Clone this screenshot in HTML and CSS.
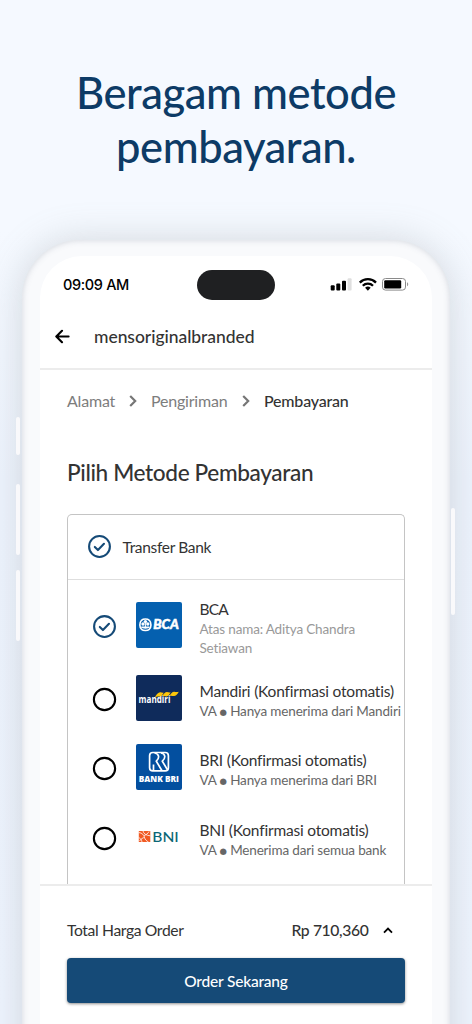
FILE: index.html
```html
<!DOCTYPE html>
<html lang="id">
<head>
<meta charset="utf-8">
<title>Beragam metode pembayaran</title>
<link rel="stylesheet" href="styles.css">
</head>
<body>
<main class="promo">
  <h1 class="headline">Beragam metode<br>pembayaran.</h1>
  <div class="phone">
    <i class="key key-mute"></i><i class="key key-up"></i><i class="key key-down"></i><i class="key key-power"></i>
    <div class="screen">
      <div class="status">
        <span class="clock">09:09 AM</span>
        <span class="island"></span>
        <svg class="indicators" width="80" height="16" viewBox="0 0 80 16">
          <rect x="0.7" y="9.2" width="4" height="5.4" rx="1"/>
          <rect x="6.3" y="7.4" width="4" height="7.2" rx="1"/>
          <rect x="12" y="4.8" width="4" height="9.8" rx="1"/>
          <rect x="17.6" y="2.2" width="4" height="12.4" rx="1" fill="#dfdfdf"/>
          <g fill="none" stroke="#000" stroke-width="2.3">
            <path d="M29.8 6.6a11.4 11.4 0 0 1 16.2 0"/>
            <path d="M32.8 9.7a7.2 7.2 0 0 1 10.2 0"/>
          </g>
          <path d="M35.1 11.8a4 4 0 0 1 5.6 0l-2.8 2.9z"/>
          <rect x="52.5" y="2.5" width="23" height="11.6" rx="3" fill="none" stroke="#8a8a8a"/>
          <rect x="54.2" y="4.2" width="17" height="8.2" rx="1.2"/>
          <path d="M77 6.2c1.7.6 1.7 3.4 0 4z" fill="#999"/>
        </svg>
      </div>
      <header class="appbar">
        <svg width="16" height="16" viewBox="0 0 16 16" fill="none" stroke="#000" stroke-width="2.1" stroke-linecap="round" stroke-linejoin="round"><path d="M13.600 8.500H1.500M7 2.800 1.300 8.500 7 14.200"/></svg>
        <span class="store">mensoriginalbranded</span>
      </header>
      <nav class="steps">
        <span class="step-1">Alamat</span>
        <svg class="sep" width="8" height="12" viewBox="0 0 8 12"><path d="M1.2 1 6.2 6l-5 5"/></svg>
        <span class="step-2">Pengiriman</span>
        <svg class="sep" width="8" height="12" viewBox="0 0 8 12"><path d="M1.2 1 6.2 6l-5 5"/></svg>
        <span class="step-3">Pembayaran</span>
      </nav>
      <h2 class="title">Pilih Metode Pembayaran</h2>
      <section class="methods">
        <div class="group">
          <svg class="radio" viewBox="0 0 24 24"><circle class="on" cx="12" cy="12" r="10"/><path class="on" d="m7.500 12.400 3 3 5.800-6"/></svg>
          <span class="group-name">Transfer Bank</span>
        </div>
        <div class="list">
          <div class="bank bank-bca">
            <svg class="radio" viewBox="0 0 24 24"><circle class="on" cx="12" cy="12" r="10"/><path class="on" d="m7.500 12.400 3 3 5.800-6"/></svg>
            <svg class="logo" viewBox="0 0 46 46">
              <rect width="46" height="46" rx="2" fill="#0560af"/>
              <path d="M5.500 18.300c1.800-1.700 6-1.700 7.800 0 2.200 2.500 2.200 6.800 0 9-1.800 1.500-6 1.500-7.800 0-2.200-2.200-2.200-6.500 0-9z" fill="none" stroke="#fff" stroke-width="1.600"/>
              <g fill="#fff"><circle cx="9.400" cy="19.600" r="1.700"/><circle cx="7" cy="22" r="1.700"/><circle cx="11.800" cy="22" r="1.700"/><path d="M8.900 21h1v3.500h3.600v1.500l-4.100.7-4.100-.7v-1.500h3.600z"/></g>
              <text class="mark-bca" x="17.300" y="27.300" textLength="25.500" lengthAdjust="spacingAndGlyphs">BCA</text>
            </svg>
            <div class="info"><div class="name name-bca">BCA</div><div class="note muted">Atas nama: Aditya Chandra<br>Setiawan</div></div>
          </div>
          <div class="bank">
            <svg class="radio" viewBox="0 0 24 24"><circle class="off" cx="12" cy="12" r="10.200"/></svg>
            <svg class="logo" viewBox="0 0 46 46">
              <rect width="46" height="46" rx="2" fill="#0f2b5b"/>
              <text class="mark-mandiri" x="2.600" y="28.200" textLength="31.800" lengthAdjust="spacingAndGlyphs">mandiri</text>
              <g fill="#fdc60a">
                <path d="M19 22.300c1.300-3 3.500-5.200 5.300-5 1.300.1 2 .8 3.400.4-1.300 2.300-2.500 3.900-3.900 3.900-1.500 0-3-.4-4.800.7z"/>
                <path d="M26.300 21.300c1.300-2.300 3-4.300 4.700-4.200 1.300.1 2 .8 3.600.4-1.300 2.300-2.500 3.900-3.900 3.900-1.400 0-2.800-.6-4.400-.1z"/>
                <path d="M33.500 20.900c1.300-2.300 3-4.200 4.700-4.100 1.500.1 2.500.6 4.600-.1-1.800 3-3.200 4.500-4.800 4.400-1.400-.1-2.800-.7-4.500-.2z"/>
              </g>
            </svg>
            <div class="info"><div class="name">Mandiri (Konfirmasi otomatis)</div><div class="note">VA <b>●</b> Hanya menerima dari Mandiri</div></div>
          </div>
          <div class="bank">
            <svg class="radio" viewBox="0 0 24 24"><circle class="off" cx="12" cy="12" r="10.200"/></svg>
            <svg class="logo" viewBox="0 0 46 46">
              <rect width="46" height="46" rx="2" fill="#034f9f"/>
              <g fill="none" stroke="#fff" stroke-width="1.700" stroke-linejoin="round">
                <rect x="13.600" y="8.500" width="18.800" height="18.400" rx="3.200"/>
                <path d="M18.500 9c4.500.5 5.500 4.800 1.800 8.200l5.700 9.500M25 9c4.500.8 5 5 1.300 8.200l5 8.300M17.500 20.500v6"/>
              </g>
              <text class="mark-bri" x="2.800" y="37.900" textLength="40.200" lengthAdjust="spacingAndGlyphs">BANK BRI</text>
            </svg>
            <div class="info"><div class="name">BRI (Konfirmasi otomatis)</div><div class="note">VA <b>●</b> Hanya menerima dari BRI</div></div>
          </div>
          <div class="bank">
            <svg class="radio" viewBox="0 0 24 24"><circle class="off" cx="12" cy="12" r="10.200"/></svg>
            <svg class="logo" viewBox="0 0 46 46">
              <path d="M2.800 17h11.500v11H2.800z" fill="#f15a23"/>
              <path d="M2.800 18.500c3.500.5 5.200 2.500 5.700 5 .4 2 2 3.500 4 4.500M7 17c.5 2.500 3 4.500 7.300 4.800M2.800 23.700c1.500.5 2.700 1.800 3.200 4.300M8.500 23.500c-1.500 0-3.500 1.500-5 3.500M8 21.500c2-.5 4-2 5-4" fill="none" stroke="#fff" stroke-width=".8"/>
              <text class="mark-bni" x="16.300" y="27.800" textLength="26.500" lengthAdjust="spacingAndGlyphs">BNI</text>
            </svg>
            <div class="info"><div class="name">BNI (Konfirmasi otomatis)</div><div class="note">VA <b>●</b> Menerima dari semua bank</div></div>
          </div>
        </div>
      </section>
      <footer class="checkout">
        <div class="total">
          <span class="total-label">Total Harga Order</span>
          <span class="amount">Rp 710,360</span>
          <svg class="caret" width="10" height="7" viewBox="0 0 10 7"><path d="m1 5.600 4-4 4 4"/></svg>
        </div>
        <button class="order">Order Sekarang</button>
      </footer>
    </div>
  </div>
</main>
</body>
</html>
```
FILE: styles.css
```css
* { box-sizing: border-box; }
body {
  margin: 0;
  font-family: Lato, "Open Sans", sans-serif;
  font-variant-ligatures: none;
  color: #333;
  background: #f5f9ff;
}
.promo {
  height: 1024px;
  overflow: hidden;
  background: linear-gradient(#f5f9ff 0, #f5f9ff 230px, #edf3fd 480px, #eef4fe 1024px);
}
.headline {
  height: 240px;
  margin: 0;
  padding-top: 65px;
  text-align: center;
  font-weight: 500;
  font-size: 43.500px;
  line-height: 54px;
  letter-spacing: -.45px;
  color: #0d3b66;
}
.phone {
  position: relative;
  width: 428px;
  height: 900px;
  margin-left: 22px;
  padding: 16px 18px;
  border-radius: 58px;
  background: #f9fafc;
  box-shadow: 0 0 36px rgba(135, 145, 145, .3), inset 0 0 6px rgba(120, 130, 150, .3);
}
.key {
  position: absolute;
  left: -6px;
  width: 4px;
  border-radius: 2px;
  background: #f9f9fb;
}
.key-mute { top: 177px; height: 38px; }
.key-up { top: 244px; height: 71px; }
.key-down { top: 330px; height: 71px; }
.key-power { left: auto; right: -5px; top: 268px; height: 107px; }
.screen {
  display: flex;
  flex-direction: column;
  height: 768px;
  border-radius: 42px 42px 0 0;
  background: #fff;
  overflow: hidden;
}
.status {
  flex: none;
  display: grid;
  grid-template-columns: 157px 78px 1fr;
  align-items: center;
  height: 57px;
}
.clock {
  padding-left: 23px;
  font: 500 14.500px/20px Inter, sans-serif;
  letter-spacing: -.35px;
  color: #000;
}
.island { height: 30px; border-radius: 15px; background: #1f2022; }
.indicators { margin: -1px 0 0 55px; }
.appbar {
  flex: none;
  display: flex;
  align-items: center;
  gap: 23px;
  height: 57px;
  padding: 0 0 9px 15px;
  border-bottom: 2px solid #ececec;
}
.store { font-size: 17.500px; font-weight: 500; letter-spacing: -.05px; }
.steps {
  flex: none;
  display: flex;
  align-items: center;
  height: 62px;
  padding: 0 0 2px 27px;
  font-size: 16px;
  letter-spacing: -.2px;
  color: #7d7d7d;
}
.sep { margin: 2px 14px 0; }
.sep path { fill: none; stroke: #777; stroke-width: 2.200; }
.step-1 { width: 48px; }
.step-2 { width: 77px; }
.step-3 { color: #333; font-weight: 500; }
.title {
  flex: none;
  height: 82px;
  margin: 0;
  padding-left: 27px;
  font-size: 22.600px;
  line-height: 82px;
  font-weight: 500;
  letter-spacing: -.36px;
  white-space: nowrap;
}
.methods {
  flex: 1;
  min-height: 0;
  margin: 0 27px;
  border: 1px solid #c4c4c4;
  border-bottom: 0;
  border-radius: 5px 5px 0 0;
  overflow: hidden;
}
.group {
  display: flex;
  align-items: center;
  gap: 10.500px;
  height: 65px;
  padding: 0 0 1px 19px;
  border-bottom: 1px solid #dedede;
  font-size: 15.500px;
  letter-spacing: -.32px;
}
.radio { flex: none; width: 25px; height: 25px; fill: none; stroke-width: 2; }
.on { stroke: #154a77; stroke-linecap: round; stroke-linejoin: round; }
.off { stroke: #000; }
.list { padding: 21.500px 0 0 24px; }
.bank { display: flex; height: 69.500px; }
.bank-bca { height: 73px; }
.bank .radio { margin-top: 12px; }
.logo { flex: none; width: 46px; height: 46px; margin: 0 17.500px 0 19px; }
.info { padding-top: 5px; white-space: nowrap; }
.bank-bca .info { padding-top: 0; margin-top: -3.500px; }
.name { font-size: 15.500px; line-height: 22px; letter-spacing: -.2px; }
.name-bca { letter-spacing: -.8px; }
.note { font-size: 13.500px; line-height: 18.500px; letter-spacing: -.16px; color: #666; }
.note b { font: 8.500px/10px "DejaVu Sans", sans-serif; position: relative; top: -1px; }
.muted { color: #999; }
.mark-bca { font: italic 900 13px Lato, sans-serif; fill: #fff; stroke: #fff; stroke-width: .5; }
.mark-mandiri { font: 700 9.800px "Open Sans", sans-serif; fill: #fff; }
.mark-bri { font: 800 9.300px "Open Sans", sans-serif; fill: #fff; }
.mark-bni { font: 500 14px Lato, sans-serif; fill: #0b6775; }
.checkout {
  flex: none;
  height: 140px;
  padding: 30px 27px 0;
  border-top: 2px solid #ececec;
}
.total { display: flex; align-items: center; height: 28px; font-size: 15.700px; letter-spacing: -.37px; }
.amount { margin-left: auto; font-weight: 500; }
.caret { margin: 0 12.500px 0 14px; }
.caret path { fill: none; stroke: #000; stroke-width: 1.800; }
.order {
  display: block;
  width: 100%;
  height: 45px;
  margin: 14px 0 0;
  border: 0;
  border-radius: 4px;
  background: #154a77;
  box-shadow: 0 1px 3px rgba(0, 0, 0, .45);
  color: #fff;
  font: 500 15.500px Lato, sans-serif;
  letter-spacing: -.2px;
}
```
